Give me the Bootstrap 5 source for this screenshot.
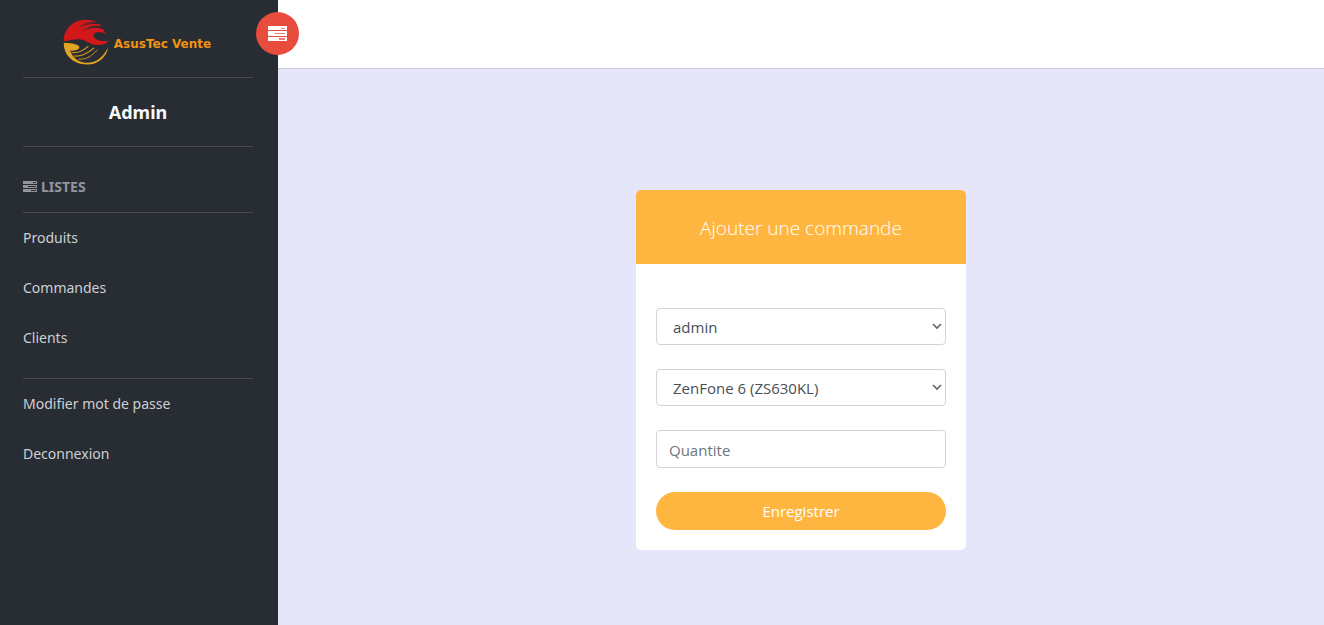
<!DOCTYPE html>
<html lang="fr">
<head>
<meta charset="utf-8">
<meta name="viewport" content="width=device-width, initial-scale=1">
<title>AsusTec Vente - Ajouter une commande</title>
<link href="https://cdn.jsdelivr.net/npm/bootstrap@5.3.0/dist/css/bootstrap.min.css" rel="stylesheet">
<style>
body { background: #e6e6fa; font-family: "Open Sans", sans-serif; }
.sidebar { width: 278px; background: #282c33; padding: 0 25px 0 23px; font-family: "Noto Sans", sans-serif; font-size: 14px; line-height: 20px; }
.brand-link { height: 77px; padding: 7px 2px 0 0; gap: 5px; color: #ee9410; font: bold 12px/16px "DejaVu Sans", sans-serif; }
.rule-top { border-top: 1px solid #4a4b4d; }
.user-name { height: 69px; font-size: 18px; line-height: 68px; color: #f8f9fa; }
.menu-title { height: 66px; padding-top: 30px; color: #92949f; gap: 4px; font-size: 14px; line-height: 20px; }
.menu-link { display: block; height: 50px; padding: 15px 0; color: #ced0d3; text-decoration: none; }
.menu-link:hover { color: #fff; }
.menu-group { padding-bottom: 15px; }
.topbar { height: 69px; background: #fff; border-bottom: 1px solid #c9c8dc; }
.toggle-btn { left: -22px; top: 12px; width: 43px; height: 43px; background: #e84c3d; }
.order-card { width: 330px; margin-top: 121px; border-radius: 5px; overflow: hidden; }
.order-title { background: #ffb641; color: #fff; height: 74px; font-size: 19px; line-height: 76px; font-weight: 300; }
.order-form { padding: 44px 20px 20px; gap: 24px; }
.order-form .form-select, .order-form .form-control { height: 37px; font-size: 15px; line-height: 24px; border-color: #ced4da; border-radius: 4px; color: #495057; }
.order-form .form-control { height: 38px; padding: 7px 12px 5px; }
.order-form .form-select { padding: 6px 28px 6px 16px; background-size: 10px 10px; background-position: right 3px center; background-image: url("data:image/svg+xml,%3Csvg xmlns='http://www.w3.org/2000/svg' viewBox='0 0 10 10'%3E%3Cpath d='M1 2l4 4 4-4' fill='none' stroke='%23666' stroke-width='1.7'/%3E%3C/svg%3E"); }
.order-form .form-control::placeholder { color: #6c757d; }
.save-btn { height: 38px; background: #ffb641; color: #fff; font-size: 15px; line-height: 24px; }
.save-btn:hover { background: #f5a623; color: #fff; }
</style>
</head>
<body>
<div class="d-flex min-vh-100">
  <nav class="sidebar flex-shrink-0" aria-label="Menu principal">
    <a href="#" class="brand-link d-flex align-items-center justify-content-center text-decoration-none">
      <svg width="46" height="46" viewBox="0 0 46 46" aria-hidden="true">
        <path fill="#d41718" d="M.6 22C1 10 10 1 22 .8c5-.1 9 .9 12.500 3C28 3.500 23 5 19.500 8 25 4.800 31 4.200 36.500 5.300l2 2C32 6.500 26.500 8 22.500 11c5.500-2.600 12-2.800 17.500-1l3 4.700c-6-2-10.500-1.700-12 .3-1.300 2.500.5 5 4.500 6.200 3 .9 6.500 1 9.900.6-1.600 3-6 4.500-11.400 4.300C27 25.800 24 21.500 18 20.500 12 19.500 6 22.300.6 22z"/>
        <path fill="none" stroke="#282c33" stroke-width=".8" d="M17 8C22 4 28 2.500 34 4M20 12c5-4 12-5.500 18-4.500"/>
        <path fill="#e0a422" d="M.8 23.800c6 .4 12 .8 14.800 3 1.600 1.500.4 3.500-2 4.300-2.500.9-4.500.8-6.500.5 2.300 7.300 8.800 12 16.400 12.200C33 44 41 38 45 28c-.8 10-10 17.700-21 17.500C10 45.300.4 36 .8 23.800z"/>
        <g fill="none" stroke="#c9921f" stroke-linecap="round">
          <path stroke-width="1.200" d="M9 33.500c7 .8 11-2 16-6"/>
          <path stroke-width="1.100" d="M11 37c8 1 14-3 20-8"/>
          <path stroke-width="1" d="M16 40.200c8 .5 13-3.500 18-9"/>
        </g>
      </svg>
      <span class="pt-1">AsusTec Vente</span>
    </a>
    <div class="user-name rule-top text-center fw-bold">Admin</div>
    <h2 class="menu-title rule-top d-flex align-items-start m-0 fw-bold"><svg class="mt-1" width="14" height="12" viewBox="0 0 14 12" aria-hidden="true"><path fill="currentColor" fill-rule="evenodd" d="M0 0h14v3H0zM10 1v1h3V1zM0 4h14v3H0zM5 5v1h8V5zM0 8h14v3H0zM8 9v1h5V9z"/></svg><span>LISTES</span></h2>
    <div class="menu-group rule-top">
      <a class="menu-link" href="#">Produits</a>
      <a class="menu-link" href="#">Commandes</a>
      <a class="menu-link" href="#">Clients</a>
    </div>
    <div class="rule-top">
      <a class="menu-link" href="#">Modifier mot de passe</a>
      <a class="menu-link" href="#">Deconnexion</a>
    </div>
  </nav>
  <div class="flex-grow-1">
    <header class="topbar position-relative">
      <button type="button" class="toggle-btn position-absolute btn border-0 rounded-circle p-0 d-flex align-items-center justify-content-center" aria-label="Basculer le menu">
        <svg width="19" height="15" viewBox="0 0 19 15" aria-hidden="true"><path fill="#fff" d="M0 0h19v4H0zM0 5h19v5H0zM0 11h19v4H0z"/><path fill="#ee7d72" d="M13 2h4v1h-4zM7 7h10v1H7zM11 12h6v2h-6z"/></svg>
      </button>
    </header>
    <main class="d-flex justify-content-center px-3 pb-5">
      <section class="order-card bg-white">
        <h1 class="order-title text-center m-0">Ajouter une commande</h1>
        <form class="order-form d-flex flex-column">
          <select class="form-select" aria-label="Client"><option>admin</option></select>
          <select class="form-select" aria-label="Produit"><option>ZenFone 6 (ZS630KL)</option></select>
          <input class="form-control" type="text" placeholder="Quantite" aria-label="Quantite">
          <button type="button" class="save-btn btn border-0 rounded-pill w-100">Enregistrer</button>
        </form>
      </section>
    </main>
  </div>
</div>
<script src="https://cdn.jsdelivr.net/npm/bootstrap@5.3.0/dist/js/bootstrap.bundle.min.js"></script>
</body>
</html>
